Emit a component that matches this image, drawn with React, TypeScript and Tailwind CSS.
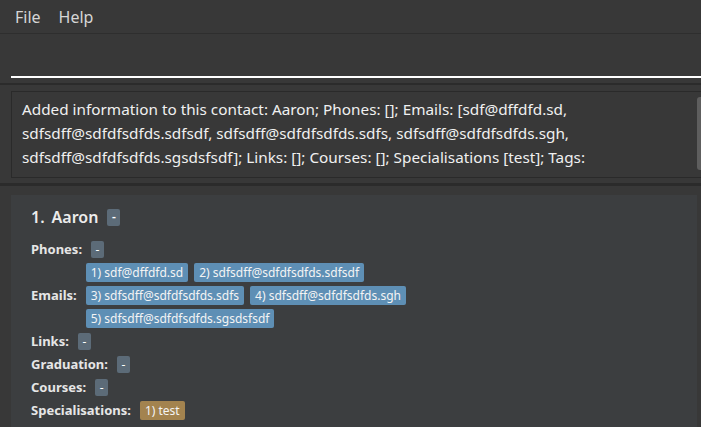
import React from "react";

const emails = [
  ["1) sdf@dffdfd.sd", "2) sdfsdff@sdfdfsdfds.sdfsdf"],
  ["3) sdfsdff@sdfdfsdfds.sdfs", "4) sdfsdff@sdfdfsdfds.sgh"],
  ["5) sdfsdff@sdfdfsdfds.sgsdsfsdf"],
];

const Dash = () => (
  <span className="inline-flex items-center justify-center h-[17px] w-[13px] rounded-[2px] bg-[#5c6b78] text-white text-[12px] leading-none">
    -
  </span>
);

const Field = ({ label, children }: { label: string; children: React.ReactNode }) => (
  <div className="flex items-center gap-[9px] h-[23px]">
    <span className="font-bold text-[13px] text-[#e6e6e6]">{label}</span>
    {children}
  </div>
);

export default function App() {
  return (
    <div
      className="w-[701px] h-[427px] overflow-hidden bg-[#383838] text-[#e8e8e8] flex flex-col"
      style={{ fontFamily: '"Noto Sans", "Open Sans", sans-serif' }}
    >
      {/* menu bar */}
      <div className="h-[34px] shrink-0 flex items-center gap-[18px] px-[15px] border-b border-[#2e2e2e] text-[16px] text-[#d6d6d6]">
        <span>File</span>
        <span>Help</span>
      </div>

      {/* command box */}
      <div className="h-[51px] shrink-0 pl-[11px] flex flex-col justify-end border-b-2 border-[#2b2b2b]">
        <div className="h-[2px] bg-white mb-[5px]" />
      </div>

      {/* result display */}
      <div className="shrink-0 pl-[11px] pt-[6px] pb-[5px] border-b-[3px] border-[#2b2b2b]">
        <div className="relative h-[87px] border border-r-0 border-[#2a2a2a] pl-[10px] pr-[20px] pt-[5px] text-[15.3px] leading-[24px] text-[#f0f0f0]">
          <p>Added information to this contact: Aaron; Phones: []; Emails: [sdf@dffdfd.sd,</p>
          <p>sdfsdff@sdfdfsdfds.sdfsdf, sdfsdff@sdfdfsdfds.sdfs, sdfsdff@sdfdfsdfds.sgh,</p>
          <p>sdfsdff@sdfdfsdfds.sgsdsfsdf]; Links: []; Courses: []; Specialisations [test]; Tags:</p>
          <div className="absolute right-0 top-[5px] w-[4px] h-[73px] rounded-l-[3px] bg-[#5e5e5e]" />
        </div>
      </div>

      {/* person list */}
      <div className="flex-1 pt-[9px] pl-[11px] flex">
        <div className="flex-1 bg-[#3c3e40] pl-[20px] pt-[10px]">
          <div className="flex items-center h-[24px] text-[16px] font-semibold text-[#ececec]">
            <span>1.</span>
            <span className="ml-[7px]">Aaron</span>
            <span className="ml-[9px] flex">
              <Dash />
            </span>
          </div>
          <div className="mt-[9px] flex flex-col">
            <Field label="Phones:">
              <Dash />
            </Field>
            <div className="flex items-center gap-[9px]">
              <span className="font-bold text-[13px] text-[#e6e6e6]">Emails:</span>
              <div className="flex flex-col gap-[4px] py-[2px]">
                {emails.map((row, i) => (
                  <div key={i} className="flex gap-[6px]">
                    {row.map((e) => (
                      <span
                        key={e}
                        className="h-[19px] px-[5px] rounded-[2px] bg-[#5e8fb5] text-[#f4f4f4] text-[12px] leading-[19px]"
                      >
                        {e}
                      </span>
                    ))}
                  </div>
                ))}
              </div>
            </div>
            <Field label="Links:">
              <Dash />
            </Field>
            <Field label="Graduation:">
              <Dash />
            </Field>
            <Field label="Courses:">
              <Dash />
            </Field>
            <Field label="Specialisations:">
              <span className="h-[19px] px-[5px] rounded-[2px] bg-[#a3834f] text-[#f4f4f4] text-[12px] leading-[19px]">
                1) test
              </span>
            </Field>
          </div>
        </div>
        <div className="w-[4px] bg-[#383838]" />
      </div>
    </div>
  );
}
